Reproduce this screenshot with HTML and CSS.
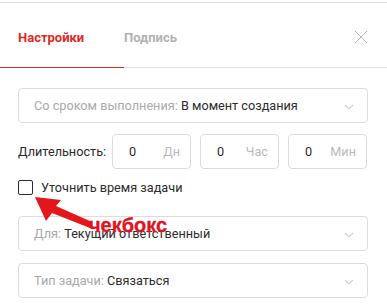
FILE: index.html
```html
<!DOCTYPE html>
<html lang="ru">
<head>
  <meta charset="UTF-8" />
  <title>Настройки</title>
  <link rel="stylesheet" href="styles.css">
</head>
<body>
  <div class="modal">
    <div class="tabs">
      <div class="tab active">Настройки</div>
      <div class="tab">Подпись</div>
      <div class="close">
        <svg width="14" height="14" viewBox="0 0 14 14"><path d="M1 1L13 13M13 1L1 13" stroke="#b5b5b5" stroke-width="1"/></svg>
      </div>
    </div>

    <div class="content">
      <div class="select">
        <span class="label">Со сроком выполнения:</span>&nbsp;<span class="value">В момент создания</span>
        <svg class="chevron" width="10" height="6" viewBox="0 0 10 6"><path d="M1 1L5 5L9 1" fill="none" stroke="#cfcfcf" stroke-width="1.2"/></svg>
      </div>

      <div class="duration">
        <span class="duration-label">Длительность:</span>
        <div class="num"><span>0</span><span class="unit">Дн</span></div>
        <div class="num"><span>0</span><span class="unit">Час</span></div>
        <div class="num"><span>0</span><span class="unit">Мин</span></div>
      </div>

      <label class="check">
        <span class="box"></span>
        <span>Уточнить время задачи</span>
      </label>

      <div class="select second">
        <span class="label">Для:</span>&nbsp;<span class="value">Текущий ответственный</span>
        <svg class="chevron" width="10" height="6" viewBox="0 0 10 6"><path d="M1 1L5 5L9 1" fill="none" stroke="#cfcfcf" stroke-width="1.2"/></svg>
      </div>

      <div class="select">
        <span class="label">Тип задачи:</span>&nbsp;<span class="value">Связаться</span>
        <svg class="chevron" width="10" height="6" viewBox="0 0 10 6"><path d="M1 1L5 5L9 1" fill="none" stroke="#cfcfcf" stroke-width="1.2"/></svg>
      </div>
    </div>

    <!-- annotation -->
    <svg class="arrow" width="100" height="45" viewBox="0 0 100 45">
      <path d="M35 7 L61 10 L56 16 L92 32 L90 38 L52 23 L46 31 Z" fill="#e3161b"/>
    </svg>
    <div class="note">чекбокс</div>
  </div>
</body>
</html>
```

FILE: styles.css
```css
body {
  margin: 0;
  background: #fff;
  font-family: Roboto, "Noto Sans", sans-serif;
  font-size: 12.7px;
  color: #2b2b2b;
}

.modal {
  position: relative;
  padding-top: 2px;
}

.tabs {
  display: flex;
  align-items: stretch;
  height: 64px;
  border-top: 1px solid #dedede;
  border-bottom: 1px solid #dedede;
}

.tab {
  display: flex;
  align-items: center;
  padding: 4px 20px 0 0;
  font-size: 13px;
  font-weight: bold;
  color: #b2b2b2;
}

.tab.active {
  width: 86px;
  padding-left: 18px;
  color: #dd2a22;
  border-bottom: 1px solid #dd2a22;
  margin-bottom: -1px;
}

.close {
  margin-left: auto;
  padding: 4px 19px 0 0;
  display: flex;
  align-items: center;
}

.content {
  padding: 20px 19px 0 18px;
}

.select {
  position: relative;
  height: 33px;
  display: flex;
  align-items: center;
  padding-left: 15px;
  border: 1px solid #dcdcdc;
  border-radius: 4px;
  white-space: pre;
}

.select .label {
  color: #a9a9a9;
}

.chevron {
  position: absolute;
  right: 13px;
  top: 15px;
}

.second {
  margin-top: 21px;
  margin-bottom: 12px;
}

.duration {
  display: flex;
  align-items: center;
  gap: 9px;
  margin-top: 11px;
}

.duration-label {
  width: 85px;
}

.num {
  display: flex;
  align-items: center;
  justify-content: space-between;
  padding: 0 10px 0 16px;
  box-sizing: border-box;
  width: 79px;
  height: 35px;
  border: 1px solid #dcdcdc;
  border-radius: 4px;
}

.unit {
  color: #b9b9b9;
}

.check {
  display: flex;
  align-items: center;
  gap: 8px;
  margin-top: 11px;
}

.box {
  width: 13px;
  height: 13px;
  border: 1.5px solid #2b2b2b;
  border-radius: 2px;
}

.arrow {
  position: absolute;
  left: 0;
  top: 190px;
}

.note {
  position: absolute;
  left: 89px;
  top: 215px;
  font-family: "Liberation Sans", sans-serif;
  font-weight: bold;
  font-size: 20px;
  line-height: 20px;
  color: #e0141e;
  -webkit-text-stroke: 0.3px #e0141e;
}
```
